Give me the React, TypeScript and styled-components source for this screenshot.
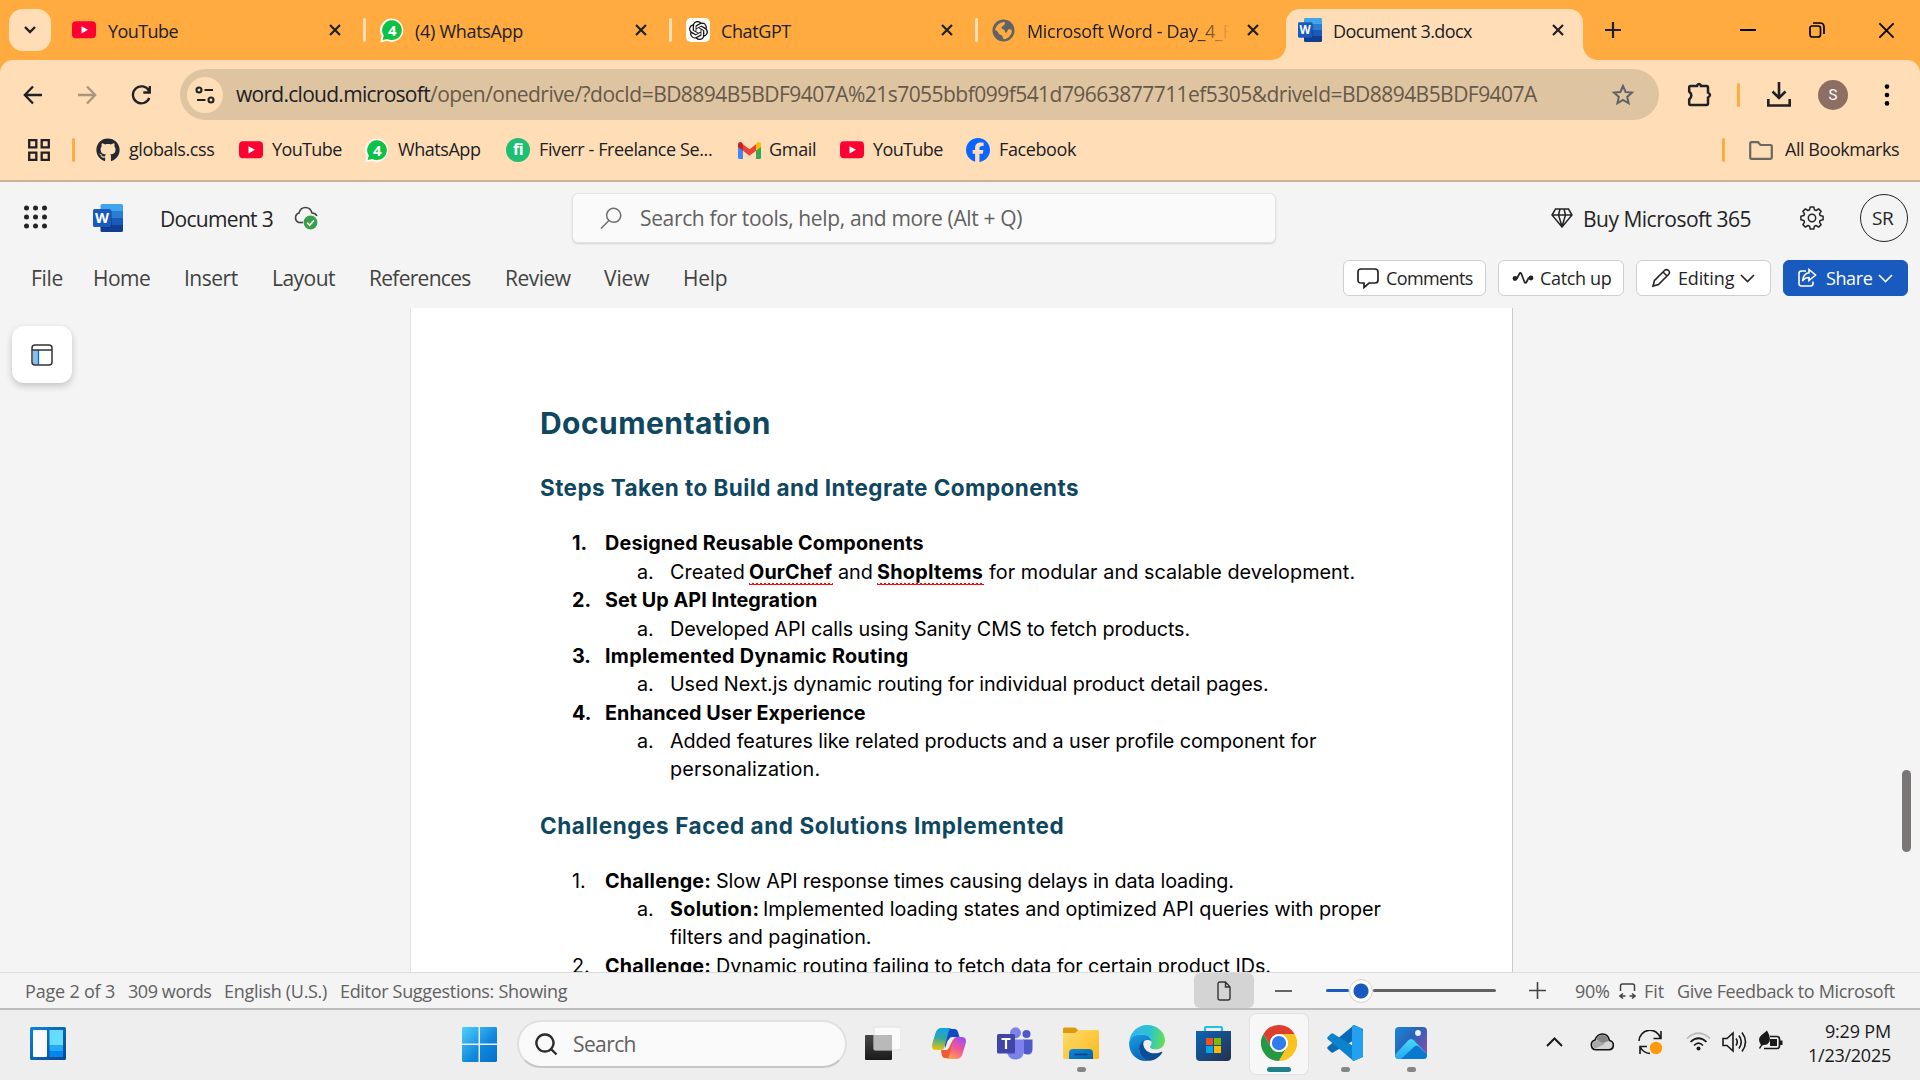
import React from "react";
import styled, { createGlobalStyle } from "styled-components";
import { FaGithub, FaFacebook } from "react-icons/fa6";
import { SiOpenai } from "react-icons/si";

const Global = createGlobalStyle`
  * { box-sizing: border-box; }
  html, body { margin: 0; padding: 0; }
  body { width: 1920px; height: 1080px; overflow: hidden; font-family: "Open Sans", "Noto Sans", sans-serif; color: #202124; }
  svg { display: block; flex: none; }
`;

const Screen = styled.div`
  width: 1920px;
  height: 1080px;
  display: flex;
  flex-direction: column;
  overflow: hidden;
  background: #ffab40;
`;

/* Single-line label with a fixed column width */
const Label = styled.span<{ $w: number; $ls?: number; $size?: number; $ml?: number; $dy?: number; $color?: string }>`
  flex: none;
  width: ${(p) => p.$w}px;
  margin-left: ${(p) => p.$ml ?? 0}px;
  margin-top: ${(p) => p.$dy ?? 0}px;
  font-size: ${(p) => p.$size ?? 18}px;
  letter-spacing: ${(p) => p.$ls ?? 0}px;
  color: ${(p) => p.$color ?? "inherit"};
  line-height: 28px;
  white-space: pre;
`;

const Glyph = styled.span<{ $ml?: number; $mt?: number }>`
  flex: none;
  display: flex;
  margin-left: ${(p) => p.$ml ?? 0}px;
  margin-top: ${(p) => p.$mt ?? 0}px;
`;

const Divider = styled.span<{ $color: string; $ml?: number }>`
  flex: none;
  width: 3px;
  height: 24px;
  border-radius: 2px;
  margin-left: ${(p) => p.$ml ?? 0}px;
  background: ${(p) => p.$color};
`;

/* ---------- Browser chrome ---------- */
const TabStrip = styled.header`
  height: 60px;
  flex: none;
  display: flex;
  padding-left: 9px;
`;
const TabSearch = styled.div`
  width: 42px;
  height: 42px;
  margin: 9px 9px 0 0;
  border-radius: 14px;
  background: #ffdeb7;
  display: grid;
  place-items: center;
`;
const Tab = styled.div<{ $first?: boolean }>`
  width: 306px;
  height: 60px;
  display: flex;
  align-items: center;
  padding-left: ${(p) => (p.$first ? 12 : 14)}px;
`;
const TabEnd = styled.div`
  margin-left: auto;
  display: flex;
  align-items: center;
`;
const ActiveTab = styled.div`
  position: relative;
  width: 297px;
  height: 51px;
  margin: 9px 0 0 2px;
  padding: 0 0 9px 12px;
  border-radius: 14px 14px 0 0;
  background: #ffdeb7;
  display: flex;
  align-items: center;
  &::before, &::after {
    content: "";
    position: absolute;
    bottom: 0;
    width: 15px;
    height: 15px;
  }
  &::before { left: -15px; background: radial-gradient(circle at 0 0, transparent 14.5px, #ffdeb7 15.5px); }
  &::after { right: -15px; background: radial-gradient(circle at 100% 0, transparent 14.5px, #ffdeb7 15.5px); }
`;
const FadeClip = styled.span`
  width: 208px;
  margin-left: 12px;
  overflow: hidden;
  display: flex;
  mask-image: linear-gradient(90deg, #000 170px, transparent 203px);
`;
const WindowButtons = styled.div`
  height: 60px;
  flex: 1;
  display: flex;
  align-items: center;
`;
const ChromeBody = styled.div`
  height: 122px;
  flex: none;
  background: #ffdeb7;
  border-radius: 13px 13px 0 0;
  border-bottom: 2px solid #cbb292;
`;
const Toolbar = styled.div`
  height: 60px;
  padding-top: 9px;
  display: flex;
  align-items: center;
`;
const NavButtons = styled.div`
  width: 180px;
  display: flex;
  padding-left: 21px;
  gap: 30px;
`;
const AddressBar = styled.div`
  width: 1479px;
  height: 51px;
  border-radius: 26px;
  background: #dfc4a1;
  display: flex;
  align-items: center;
  padding-left: 7px;
`;
const SiteInfo = styled.span`
  width: 36px;
  height: 36px;
  border-radius: 50%;
  background: #ffdeb7;
  display: grid;
  place-items: center;
`;
const Avatar = styled.span`
  width: 30px;
  height: 30px;
  margin-left: 27px;
  border-radius: 50%;
  background: #8d6e63;
  color: #fff;
  font: 15px/30px "Roboto", sans-serif;
  text-align: center;
`;
const Bookmarks = styled.div`
  height: 60px;
  display: flex;
  align-items: center;
  padding-left: 28px;
`;
const FiverrBadge = styled.span`
  width: 24px;
  height: 24px;
  border-radius: 50%;
  background: #1dbf73;
  color: #fff;
  font: bold 16px/23px "Open Sans", sans-serif;
  letter-spacing: -0.5px;
  text-align: center;
`;
const GptBadge = styled.span`
  width: 24px;
  height: 24px;
  border-radius: 5px;
  background: #fff;
  color: #111;
  display: grid;
  place-items: center;
`;

/* ---------- Word ---------- */
const WordHeader = styled.div`
  height: 73px;
  flex: none;
  padding-bottom: 1px;
  background: #f4f4f4;
  display: flex;
  align-items: center;
`;
const SearchBox = styled.div`
  width: 704px;
  height: 50px;
  margin-left: 253px;
  padding-left: 27px;
  border-radius: 6px;
  background: #fafafa;
  border: 1px solid #e3e3e3;
  box-shadow: 0 1px 2px rgba(0, 0, 0, 0.14);
  display: flex;
  align-items: center;
`;
const Persona = styled.span`
  width: 48px;
  height: 48px;
  margin-left: 36px;
  border: 1.5px solid #242424;
  border-radius: 50%;
  display: flex;
  align-items: center;
  padding-left: 11px;
`;
const Ribbon = styled.nav`
  height: 53px;
  flex: none;
  background: #f4f4f4;
  color: #424242;
  display: flex;
  align-items: center;
  padding: 0 12px 7px 31px;
`;
const Actions = styled.div`
  margin-left: auto;
  display: flex;
  gap: 12px;
`;
const ActionButton = styled.span<{ $w: number; $primary?: boolean }>`
  width: ${(p) => p.$w}px;
  height: 36px;
  border-radius: 6px;
  border: 1px solid ${(p) => (p.$primary ? "#185abd" : "#cfcfcf")};
  background: ${(p) => (p.$primary ? "#185abd" : "#fff")};
  color: ${(p) => (p.$primary ? "#fff" : "#242424")};
  display: flex;
  align-items: center;
`;
const Canvas = styled.main`
  height: 664px;
  flex: none;
  background: #f4f4f4;
  display: flex;
  overflow: hidden;
`;
const NavPaneButton = styled.div`
  width: 60px;
  height: 57px;
  margin: 18px 338px 0 12px;
  border-radius: 12px;
  background: #fff;
  box-shadow: 0 3px 7px rgba(0, 0, 0, 0.2);
  display: grid;
  place-items: center;
`;
const Page = styled.article`
  width: 1103px;
  height: 700px;
  flex: none;
  padding: 95px 0 0 129px;
  background: #fff;
  border: solid #e1e1e1;
  border-width: 0 1px;
  border-right-color: #c9c9c9;
  font-family: "Inter", "Open Sans", sans-serif;
  color: #000;
`;
const ScrollThumb = styled.div`
  width: 9px;
  height: 82px;
  margin: 462px 0 0 389px;
  border-radius: 5px;
  background: #797775;
`;
const Title = styled.h1`
  margin: 0 0 42px;
  font-size: 30px;
  line-height: 40px;
  color: #0f4761;
  display: flex;
`;
const Subtitle = styled.h2`
  margin: 0 0 28px;
  font-size: 22.5px;
  line-height: 30px;
  color: #0f4761;
  display: flex;
`;
const List = styled.div<{ $gap?: number }>`
  padding-left: 32px;
  margin-bottom: ${(p) => p.$gap ?? 0}px;
`;
const Line = styled.div<{ $h?: number; $level?: number }>`
  height: ${(p) => p.$h ?? 28}px;
  line-height: 28px;
  font-size: 19.8px;
  padding-left: ${(p) => (p.$level ? 65 : 0)}px;
  display: flex;
  white-space: pre;
`;
const Marker = styled.span<{ $bold?: boolean; $w?: number }>`
  width: ${(p) => p.$w ?? 33}px;
  flex: none;
  font-weight: ${(p) => (p.$bold ? 700 : 400)};
`;
const Run = styled.span<{ $w: number; $ls?: number; $bold?: boolean; $ml?: number; $wavy?: boolean }>`
  flex: none;
  width: ${(p) => p.$w}px;
  margin-left: ${(p) => p.$ml ?? 0}px;
  letter-spacing: ${(p) => p.$ls ?? 0}px;
  font-weight: ${(p) => (p.$bold ? 700 : 400)};
  height: 28px;
  ${(p) => p.$wavy && `
    background: radial-gradient(circle at 2px 0, transparent 1.2px, #f00 1.3px, #f00 2.1px, transparent 2.3px) 0 25px / 4px 3px repeat-x;
  `}
`;
const StatusBar = styled.footer`
  height: 38px;
  flex: none;
  background: #f4f4f4;
  border-top: 1px solid #dcdcdc;
  border-bottom: 2px solid #bdbdbd;
  color: #616161;
  display: flex;
  align-items: center;
  padding-left: 25px;
`;
const ViewButton = styled.span`
  width: 60px;
  height: 35px;
  margin-left: 627px;
  border-radius: 6px;
  background: #d4d4d4;
  display: grid;
  place-items: center;
`;
const Slider = styled.span`
  display: flex;
  align-items: center;
  width: 170px;
  margin-left: 34px;
`;
const Rail = styled.span<{ $w: number; $c: string }>`
  width: ${(p) => p.$w}px;
  height: 3px;
  border-radius: 2px;
  background: ${(p) => p.$c};
`;
const Knob = styled.span`
  width: 24px;
  height: 24px;
  border-radius: 50%;
  border: 1px solid #d1d1d1;
  background: radial-gradient(circle, #185abd 7px, #fff 8px);
`;

/* ---------- Taskbar ---------- */
const Taskbar = styled.div`
  height: 70px;
  flex: none;
  background: #eeeeee;
  display: flex;
  align-items: flex-start;
  padding-left: 30px;
`;
const StartSearch = styled.div`
  width: 330px;
  height: 48px;
  margin: 10px 0 0 20px;
  padding-left: 16px;
  border-radius: 24px;
  background: #fafafa;
  border: 2px solid #e0e0e0;
  border-bottom-color: #c6c6c6;
  display: flex;
  align-items: center;
`;
const Apps = styled.div`
  display: flex;
  margin-left: 3px;
`;
const AppSlot = styled.div<{ $active?: boolean }>`
  width: 58px;
  height: 60px;
  margin: 4px 4px 0;
  padding-top: 11px;
  border-radius: 6px;
  display: flex;
  flex-direction: column;
  align-items: center;
  background: ${(p) => (p.$active ? "#f7f7f7" : "transparent")};
  box-shadow: ${(p) => (p.$active ? "0 0 0 1px #e2e2e2" : "none")};
`;
const Indicator = styled.span<{ $active?: boolean; $mt?: number }>`
  width: ${(p) => (p.$active ? 24 : 9)}px;
  height: 5px;
  margin-top: ${(p) => p.$mt ?? 6}px;
  border-radius: 3px;
  background: ${(p) => (p.$active ? "#22808d" : "#868686")};
`;
const Tray = styled.div`
  height: 64px;
  margin-left: auto;
  display: flex;
  align-items: center;
  color: #1a1a1a;
  padding-right: 29px;
`;
const Clock = styled.div`
  margin: 2px 0 0 25px;
  display: flex;
  flex-direction: column;
  align-items: flex-end;
  & > span { line-height: 24px; }
`;

/* ---------- Icons ---------- */
const YouTubeIcon = () => (
  <svg width="24" height="18" viewBox="0 0 24 18"><rect y=".3" width="24" height="17" rx="4" fill="#f03" /><path d="M9.5 5.2 16 8.8 9.5 12.4Z" fill="#fff" /></svg>
);
const WhatsAppIcon = () => (
  <svg width="24" height="25" viewBox="0 0 24 25">
    <path d="M12 .5A11.7 11.7 0 1 1 6.6 22.8L.4 24.4 1.6 18A11.7 11.7 0 0 1 12 .5Z" fill="#fff" opacity=".92" />
    <path d="M12.2 2.3A9.9 9.9 0 1 1 7.2 20.9L2.6 22 3.8 17.6A9.9 9.9 0 0 1 12.2 2.3Z" fill="#0cc143" />
    <text x="12.2" y="17.8" fontSize="15" fontWeight="700" fontFamily="Open Sans" textAnchor="middle" fill="#fff">4</text>
  </svg>
);
const CloseX = ({ s = 12, w = 2.2, c = "#202124" }: { s?: number; w?: number; c?: string }) => (
  <svg width={s} height={s} viewBox="0 0 12 12"><path d="M1 1l10 10M11 1L1 11" stroke={c} strokeWidth={(w * 12) / s} fill="none" /></svg>
);
const GlobeIcon = () => (
  <svg width="23" height="23" viewBox="0 0 24 24"><circle cx="12" cy="12" r="11.5" fill="#5f6368" /><path d="M3.2 11.5C4 7 8 3.2 12.5 3c1.8.2 1 2 .4 3-.9 1.4-3 1.4-3 3.2 0 1.5 2 1.3 3 2.3 1 1.1.2 2.8 1.6 2.8 1.8 0 1.2-3 3-3.600 1.4-.4 2.8.3 3.300 1.2-.2 4.700-3.700 8.600-8.300 9.100-1.500-.4-1.200-2.400-1.700-3.400-.8-1.500-3.300-1-3.900-2.800-.5-1.400-1.900-2.800-3.700-3.300Z" fill="#ffab40" /></svg>
);
const WordIcon = ({ w, h, id }: { w: number; h: number; id: string }) => (
  <svg width={w} height={h} viewBox="0 0 30 28" preserveAspectRatio="none">
    <defs><clipPath id={id}><rect x="7.5" width="22.5" height="28" rx="1.6" /></clipPath></defs>
    <g clipPath={`url(#${id})`}><path fill="#41a5ee" d="M7 0h23v7H7z" /><path fill="#2b7cd3" d="M7 7h23v7H7z" /><path fill="#185abd" d="M7 14h23v7H7z" /><path fill="#103f91" d="M7 21h23v7H7z" /><path fill="#000" opacity=".2" d="M7 6h10.500a1.500 1.500 0 0 1 1.500 1.500v14a2 2 0 0 1-2 2H7z" /></g>
    <rect y="5" width="18" height="18" rx="1.6" fill="#185abd" />
    <text x="9" y="18.8" fontSize="13.5" fontWeight="700" fontFamily="Open Sans" textAnchor="middle" fill="#fff" textLength="14" lengthAdjust="spacingAndGlyphs">W</text>
  </svg>
);
const Stroke = ({ w, h, d, sw = 2, c = "#202124", vb }: { w: number; h: number; d: string; sw?: number; c?: string; vb?: string }) => (
  <svg width={w} height={h} viewBox={vb ?? `0 0 ${w} ${h}`}><path d={d} fill="none" stroke={c} strokeWidth={sw} /></svg>
);
const GmailIcon = () => (
  <svg width="23" height="17" viewBox="0 0 23 17"><path d="M0 2.500V15.500A1.500 1.500 0 0 0 1.500 17H5V8.500L0 4Z" fill="#4285f4" /><path d="M23 2.500V15.500A1.500 1.500 0 0 1 21.500 17H18V8.500L23 4Z" fill="#34a853" /><path d="M18 2.200V8.800L23 5V2.500C23 .2 20.500-.7 19 .8Z" fill="#fbbc04" /><path d="M5 8.800V2.200L11.500 7.200 18 2.200V8.800L11.500 13.800Z" fill="#ea4335" /><path d="M0 2.500V5L5 8.800V2.200L4 .8C2.500-.7 0 .2 0 2.500Z" fill="#c5221f" /></svg>
);
const GearIcon = () => (
  <svg width="24" height="24" viewBox="0 0 24 24" fill="none" stroke="#242424" strokeWidth="1.5" strokeLinejoin="round">
    <circle cx="12" cy="12" r="3.7" />
    <path d="M10.200.9h3.600l.6 2.900 1.700.7 2.500-1.600 2.500 2.500-1.600 2.500.7 1.700 2.900.6v3.600l-2.900.6-.7 1.700 1.600 2.500-2.500 2.500-2.500-1.600-1.700.7-.6 2.900h-3.600l-.6-2.900-1.700-.7-2.500 1.600-2.500-2.500 1.600-2.500-.7-1.700-2.900-.6v-3.600l2.900-.6.7-1.700-1.600-2.500 2.500-2.500 2.500 1.600 1.700-.7Z" />
  </svg>
);
const WidgetsIcon = () => (
  <svg width="36" height="33" viewBox="0 0 36 33"><defs><linearGradient id="wg" x1="0" y1="0" x2="1" y2="1"><stop offset="0" stopColor="#0a84dc" /><stop offset="1" stopColor="#0d4690" /></linearGradient></defs>
    <rect width="36" height="33" rx="1.5" fill="url(#wg)" /><rect x="3" y="3" width="14" height="27" rx="1" fill="#fafafa" /><path fill="#68dcff" d="M19.500 3H33V18H19.500Z" /><path fill="#23a9f5" d="M19.500 18H33V24H19.500Z" /><path fill="#0486ee" d="M19.500 24H33V30H19.500Z" /></svg>
);
const FolderIcon = () => (
  <svg width="36" height="33" viewBox="0 0 36 33"><defs><linearGradient id="fy" x1="0" y1="0" x2="1" y2="1"><stop offset="0" stopColor="#ffdb70" /><stop offset="1" stopColor="#fbb917" /></linearGradient><linearGradient id="fb" x1="0" y1="0" x2="1" y2="1"><stop offset="0" stopColor="#1288d8" /><stop offset="1" stopColor="#0062b0" /></linearGradient></defs>
    <path d="M0 2Q0 .5 1.500.5H11Q12.500.5 13.500 1.500L16 4V10H0Z" fill="#dc9a0c" /><path d="M0 6H12L15.500 3H34.500Q36 3 36 4.500V30.500Q36 32 34.500 32H1.500Q0 32 0 30.500Z" fill="url(#fy)" /><path d="M6 32V26Q6 22 10 22H26Q30 22 30 26V32Z" fill="url(#fb)" /><path d="M11.500 27.500H24.500" stroke="#05467f" strokeWidth="1.5" /></svg>
);
const EdgeIcon = () => (
  <svg width="36" height="36" viewBox="0 0 36 36"><defs>
    <linearGradient id="e1" x1="0" y1=".5" x2="1" y2=".6"><stop offset="0" stopColor="#2fb4f0" /><stop offset=".55" stopColor="#2bc3d2" /><stop offset="1" stopColor="#69e04b" /></linearGradient>
    <linearGradient id="e2" x1="0" y1="0" x2=".4" y2="1"><stop offset="0" stopColor="#1b9de2" /><stop offset="1" stopColor="#0666bd" /></linearGradient>
    <linearGradient id="e3" x1="0" y1="0" x2="1" y2="1"><stop offset="0" stopColor="#0b4f9e" /><stop offset="1" stopColor="#114a8b" /></linearGradient></defs>
    <path d="M.3 16C1.500 6.800 9 0 18.200 0 28.500 0 36 7.400 36 15.300 36 21 31.600 24.400 27 24.400 23.600 24.400 21 23.300 21 22 21 21 22.600 20.300 22.600 17.500 22.600 14.200 19.500 9.500 12.500 9.500 6 9.500 2 13 .3 16Z" fill="url(#e1)" />
    <path d="M.1 18C.5 12.500 6 9.400 12.500 9.400 19.500 9.400 22.500 13.500 22.600 17 21.400 13.400 13.500 14.500 11 21 9 27 12.500 34 20 35.900 8.500 37 0 29.500 .1 18Z" fill="url(#e2)" />
    <path d="M15.500 15.200C11.500 17.200 9.800 21 10.200 25 10.800 30.500 15 35.400 20.500 35.800 26 35.500 30.500 32.200 33.300 27.600 33.600 26.800 33 26.500 32.300 26.800 26 30 16.500 28.500 14.500 20.500 14 18.400 14.500 16.500 15.500 15.200Z" fill="url(#e3)" /></svg>
);
const StoreIcon = () => (
  <svg width="35" height="36" viewBox="0 0 35 36"><defs><linearGradient id="st" x1="0" y1="0" x2="1" y2="1"><stop offset="0" stopColor="#0a66b6" /><stop offset="1" stopColor="#26304f" /></linearGradient></defs>
    <path d="M9 7V3.200Q9 2 10.200 2H24.800Q26 2 26 3.200V7" fill="none" stroke="#25bdea" strokeWidth="2.2" /><path d="M0 6H35V32Q35 36 31 36H4Q0 36 0 32Z" fill="url(#st)" />
    <path fill="#f25022" d="M10 13h7v7h-7z" /><path fill="#7fba00" d="M18 13h7v7h-7z" /><path fill="#00a4ef" d="M10 21h7v7h-7z" /><path fill="#ffb900" d="M18 21h7v7h-7z" /></svg>
);
const ChromeIcon = () => (
  <svg width="36" height="36" viewBox="0 0 48 48"><path d="M3.200 12A24 24 0 0 1 44.800 12H24A12 12 0 0 0 13.600 30Z" fill="#dd3e30" /><path d="M3.200 12A24 24 0 0 0 24 48L34.400 30A12 12 0 0 1 13.600 30Z" fill="#259745" /><path d="M44.800 12A24 24 0 0 1 24 48L34.400 30A12 12 0 0 0 24 12Z" fill="#fcc31e" /><circle cx="24" cy="24" r="12" fill="#fff" /><circle cx="24" cy="24" r="9.5" fill="#2f7cf0" /></svg>
);
const CodeIcon = () => (
  <svg width="36" height="36" viewBox="0 0 36 36"><path d="M27 0 36 4V10L6 27.500Q5 28 4 27.200L.7 24Q-.3 22.800.8 21.800Z" fill="#0a6ab5" /><path d="M26.500 36 .8 14.200Q-.3 13.200.7 12L4 8.800Q5 8 6 8.500L36 27V32Z" fill="#0e83cd" /><path d="M26.500 36Q25 35.500 25 34V2Q25 .5 26.500 0L34.500 3.600Q36 4.300 36 6V30Q36 31.700 34.500 32.400Z" fill="#24a0f0" /></svg>
);
const PhotosIcon = () => (
  <svg width="32" height="32" viewBox="0 0 32 32"><defs><linearGradient id="ph" x1="0" y1="0" x2="1" y2=".8"><stop offset="0" stopColor="#1787d8" /><stop offset=".5" stopColor="#2b62b8" /><stop offset="1" stopColor="#8a4fa8" /></linearGradient><linearGradient id="ph2" x1="0" y1="0" x2="0" y2="1"><stop offset="0" stopColor="#48d8fb" /><stop offset="1" stopColor="#1fa6ea" /></linearGradient><clipPath id="pc"><rect width="32" height="32" rx="4" /></clipPath></defs>
    <g clipPath="url(#pc)"><rect width="32" height="32" fill="url(#ph)" /><path d="M-2 30 13 13.500Q16 10.500 19 13.500L34 29V34H-2Z" fill="url(#ph2)" /><path d="M6 32 19.500 19.500Q21.500 17.800 23.500 19.500L34 29V34H4Z" fill="#0b78cf" /><circle cx="23" cy="6" r="2.9" fill="#e8f4fd" /></g></svg>
);
const TeamsIcon = () => (
  <svg width="36" height="33" viewBox="0 0 36 33"><circle cx="29.5" cy="7" r="4" fill="#5059c9" /><circle cx="18.5" cy="5.8" r="5.5" fill="#7b83eb" /><path d="M26 12.500H35.500V22Q35.500 27.500 30.500 27.500 27 27.500 26 25Z" fill="#5059c9" /><path d="M10 12.500H27V23Q27 32.500 18.500 32.500 10 32.500 10 23Z" fill="#7b83eb" /><rect y="7" width="18" height="19.5" rx="1.5" fill="#4045a8" /><path d="M4.500 12H13.500M9 12V22" stroke="#fff" strokeWidth="2.2" /></svg>
);
const CopilotIcon = () => (
  <svg width="34" height="32" viewBox="0 0 34 32"><defs>
    <linearGradient id="c1" x1=".3" y1="0" x2=".2" y2="1"><stop offset="0" stopColor="#14a1ea" /><stop offset=".45" stopColor="#31a8a0" /><stop offset="1" stopColor="#f5c500" /></linearGradient>
    <linearGradient id="c2" x1=".8" y1="0" x2=".3" y2="1"><stop offset="0" stopColor="#9d4df0" /><stop offset=".5" stopColor="#f0559c" /><stop offset="1" stopColor="#ffa14e" /></linearGradient></defs>
    <path d="M15 1H22.500Q25 1 26 4L27.500 9H21Q18 9 17 12L14 22 11 13Z" fill="#1549c6" /><path d="M9 22H14Q16 22 17 19L20.500 10 23 20 19 30H13Q10.500 30 9.800 27Z" fill="#ef5a39" />
    <path d="M9.500 0H20Q17.500.5 16.500 4L12.500 19Q11.500 22 8.500 22H4Q-1.500 22 .5 15L3.500 5Q5 0 9.500 0Z" fill="url(#c1)" /><path d="M24.500 31H13.500Q16.500 30.500 17.500 27L21 12.500Q22 9 25 9H29.500Q35.500 9 33.500 16L30.500 26Q29 31 24.500 31Z" fill="url(#c2)" />
    <path d="M18.500 9.500H21.500L20.500 12.500 17 19.500Q16 22 13 22H12.500L15.500 13Z" fill="#f3f1f0" /></svg>
);

const DARK = "#242424";

export default function App() {
  return (
    <Screen>
      <Global />
      <TabStrip>
        <TabSearch><Stroke w={14} h={10} d="M2 2L7 7L12 2" sw={2.4} /></TabSearch>
        <Tab $first>
          <YouTubeIcon /><Label $w={70} $ls={-0.57} $ml={12} $dy={2}>YouTube</Label>
          <TabEnd><CloseX /><Divider $color="#ffdeb7" $ml={22} /></TabEnd>
        </Tab>
        <Tab>
          <WhatsAppIcon /><Label $w={108} $ls={-0.3} $ml={11} $dy={2}>(4) WhatsApp</Label>
          <TabEnd><CloseX /><Divider $color="#ffdeb7" $ml={22} /></TabEnd>
        </Tab>
        <Tab>
          <GptBadge><SiOpenai size={19} /></GptBadge><Label $w={70} $ls={-0.4} $ml={11} $dy={2}>ChatGPT</Label>
          <TabEnd><CloseX /><Divider $color="#ffdeb7" $ml={22} /></TabEnd>
        </Tab>
        <Tab>
          <GlobeIcon /><FadeClip><Label $w={205} $ls={-0.32} $dy={2}>Microsoft Word - Day_4_F</Label></FadeClip>
          <TabEnd><Glyph><CloseX /></Glyph><Glyph $ml={25} /></TabEnd>
        </Tab>
        <ActiveTab>
          <WordIcon w={24} h={24} id="wt" /><Label $w={139} $ls={-0.56} $ml={11} $dy={2}>Document 3.docx</Label>
          <Glyph $ml={80}><CloseX /></Glyph>
        </ActiveTab>
        <WindowButtons>
          <Glyph $ml={22}><Stroke w={16} h={16} d="M8 0V16M0 8H16" sw={2.2} /></Glyph>
          <Glyph $ml={119}><Stroke w={16} h={2} d="M0 1H16" sw={2} c="#000" /></Glyph>
          <Glyph $ml={53}><Stroke w={16} h={16} d="M3 4H9Q11.500 4 11.500 6V12.500Q11.500 15 9 15H3.500Q1 15 1 12.500V6Q1 4 3 4ZM4 1H11Q15 1 15 5V12" sw={1.7} c="#000" /></Glyph>
          <Glyph $ml={53}><CloseX s={17} w={1.8} c="#000" /></Glyph>
        </WindowButtons>
      </TabStrip>

      <ChromeBody>
        <Toolbar>
          <NavButtons>
            <Stroke w={24} h={24} d="M21 12H4M12 3.500L3.800 12L12 20.500" sw={2.3} />
            <Stroke w={24} h={24} d="M3 12H20M12 3.500L20.200 12L12 20.500" sw={2.3} c="#a8957f" />
            <Stroke w={24} h={24} d="M20 8A8.500 8.500 0 1 0 20.300 15M20.800 3V9.500H14.300" sw={2.3} />
          </NavButtons>
          <AddressBar>
            <SiteInfo>
              <svg width="20" height="20" viewBox="0 0 20 20" fill="none" stroke="#202124" strokeWidth="2.1"><circle cx="4" cy="5" r="2.5" /><path d="M9.500 5H18M2 15H10.500" /><circle cx="16" cy="15" r="2.5" /></svg>
            </SiteInfo>
            <Label $w={194} $ls={-0.72} $ml={13} $size={21} $dy={-1}>word.cloud.microsoft</Label>
            <Label $w={1107} $ls={-0.535} $size={21} $dy={-1} $color="#66594a">/open/onedrive/?docId=BD8894B5BDF9407A%21s7055bbf099f541d79663877711ef5305&amp;driveId=BD8894B5BDF9407A</Label>
            <Glyph $ml={74}><Stroke w={24} h={24} d="M12 3L14.600 9L21 9.600L16.200 13.900L17.600 20.300L12 16.900L6.400 20.300L7.800 13.900L3 9.600L9.400 9Z" sw={2} c="#5f6368" /></Glyph>
          </AddressBar>
          <Glyph $ml={28} $mt={-2}><Stroke w={26} h={26} d="M3 5H10V4.500Q12 1.500 14 4.500V5H19.500Q21 5 21 6.500V11.500Q25 14 21 16.500V22.500Q21 24 19.500 24H3.500Q2.200 24 2.200 22.500V18.500Q6.500 14.500 2.200 10.500V6.500Q2.200 5 3.500 5Z" sw={2.5} /></Glyph>
          <Divider $color="#ffab40" $ml={24} />
          <Glyph $ml={27}><Stroke w={24} h={25} d="M12 0V15M5.500 9.500L12 16L18.500 9.500M1.300 17V23.500H22.700V17" sw={2.6} /></Glyph>
          <Avatar>S</Avatar>
          <Glyph $ml={36}><svg width="6" height="22" viewBox="0 0 6 22"><circle cx="3" cy="2.6" r="2.3" /><circle cx="3" cy="11" r="2.3" /><circle cx="3" cy="19.4" r="2.3" /></svg></Glyph>
        </Toolbar>
        <Bookmarks>
          <Stroke w={22} h={22} d="M1.200 1.200H8.300V8.300H1.200ZM13.700 1.200H20.800V8.300H13.700ZM1.200 13.700H8.300V20.800H1.200ZM13.700 13.700H20.800V20.800H13.700Z" sw={2.3} />
          <Divider $color="#ffab40" $ml={22} />
          <Glyph $ml={21}><FaGithub size={24} color="#24292f" /></Glyph><Label $w={85} $ls={-0.4} $ml={9} $dy={-2}>globals.css</Label>
          <Glyph $ml={25}><YouTubeIcon /></Glyph><Label $w={69} $ls={-0.62} $ml={9} $dy={-2}>YouTube</Label>
          <Glyph $ml={24}><WhatsAppIcon /></Glyph><Label $w={82} $ls={-0.45} $ml={9} $dy={-2}>WhatsApp</Label>
          <Glyph $ml={26}><FiverrBadge>fi</FiverrBadge></Glyph><Label $w={173} $ls={-0.4} $ml={9} $dy={-2}>Fiverr - Freelance Se...</Label>
          <Glyph $ml={26}><GmailIcon /></Glyph><Label $w={47} $ls={-0.3} $ml={8} $dy={-2}>Gmail</Label>
          <Glyph $ml={24}><YouTubeIcon /></Glyph><Label $w={69} $ls={-0.62} $ml={9} $dy={-2}>YouTube</Label>
          <Glyph $ml={24}><FaFacebook size={24} color="#0866ff" /></Glyph><Label $w={77} $ls={-0.4} $ml={9} $dy={-2}>Facebook</Label>
          <Divider $color="#ffab40" $ml={646} />
          <Glyph $ml={24}><Stroke w={24} h={19} d="M2.500 1.200H9L11.500 4H21.500Q22.800 4 22.800 5.200V16.500Q22.800 17.800 21.500 17.800H2.500Q1.200 17.800 1.200 16.500V2.500Q1.200 1.200 2.500 1.200Z" sw={2.2} c="#6b6762" /></Glyph>
          <Label $w={114} $ls={-0.45} $ml={12} $dy={-2}>All Bookmarks</Label>
        </Bookmarks>
      </ChromeBody>

      <WordHeader>
        <Glyph $ml={24} $mt={-2}><svg width="24" height="24" viewBox="0 0 24 24" fill={DARK}>{[3, 12, 21].map((y) => [2.5, 11.5, 20.5].map((x) => <circle key={`${x}-${y}`} cx={x} cy={y} r="2.5" />))}</svg></Glyph>
        <Glyph $ml={45}><WordIcon w={30} h={28} id="wh" /></Glyph>
        <Label $w={113} $ls={-0.69} $ml={37} $size={21} $dy={2} $color={DARK}>Document 3</Label>
        <Glyph $ml={20}><svg width="26" height="25" viewBox="0 0 26 25"><path d="M6 16.500A5 5 0 0 1 6 7Q7.500 1.500 12.500 1.500T19 7Q22.500 7 24 10" fill="none" stroke="#424242" strokeWidth="1.6" /><path d="M5.500 16.500H10" stroke="#424242" strokeWidth="1.6" /><circle cx="17.5" cy="16.5" r="6.9" fill="#38a04c" /><path d="M14.200 16.700L16.700 19.200L21 14.200" fill="none" stroke="#fff" strokeWidth="1.6" /></svg></Glyph>
        <SearchBox>
          <Stroke w={22} h={22} d="M9 13.500A7 7 0 1 1 14 15.300Q11 15.300 9 13.500L1 21.500" sw={1.5} c="#707070" />
          <Label $w={382} $ls={-0.35} $ml={18} $size={21} $color="#616161">Search for tools, help, and more (Alt + Q)</Label>
        </SearchBox>
        <Glyph $ml={275}><Stroke w={22} h={20} d="M4.500 1H17.500L21 7L11 19L1 7ZM1 7H21M7.500 7L11 18.500L14.500 7L13 1M9 1L7.500 7" sw={1.5} c={DARK} /></Glyph>
        <Label $w={168} $ls={-0.5} $ml={10} $size={21} $dy={2} $color={DARK}>Buy Microsoft 365</Label>
        <Glyph $ml={49}><GearIcon /></Glyph>
        <Persona><Label $w={24} $ls={-0.3} $size={19} $color={DARK}>SR</Label></Persona>
      </WordHeader>

      <Ribbon>
        <Label $w={32} $ls={-0.31} $size={21}>File</Label>
        <Label $w={57} $ls={-0.5} $ml={30} $size={21}>Home</Label>
        <Label $w={53} $ls={-0.5} $ml={34} $size={21}>Insert</Label>
        <Label $w={63} $ls={-0.53} $ml={35} $size={21}>Layout</Label>
        <Label $w={101} $ls={-0.72} $ml={34} $size={21}>References</Label>
        <Label $w={66} $ls={-0.5} $ml={35} $size={21}>Review</Label>
        <Label $w={46} $ls={-0.1} $ml={33} $size={21}>View</Label>
        <Label $w={45} $ls={-0.25} $ml={33} $size={21}>Help</Label>
        <Actions>
          <ActionButton $w={143}>
            <Glyph $ml={13}><Stroke w={22} h={21} d="M4 1H18Q21 1 21 4V12Q21 15 18 15H12L7 19.500V15H4Q1 15 1 12V4Q1 1 4 1Z" sw={1.7} c={DARK} /></Glyph>
            <Label $w={87} $ls={-0.62} $ml={7} $dy={-1}>Comments</Label>
          </ActionButton>
          <ActionButton $w={126}>
            <Glyph $ml={13}><svg width="22" height="14" viewBox="0 0 22 14"><circle cx="3" cy="7.5" r="2.4" fill={DARK} /><circle cx="19" cy="7" r="2.4" fill={DARK} /><path d="M3 7.500H5L7.500 2.500Q8.300 1 9.200 2.500L12.500 11Q13.500 13 14.500 11L16.500 7H19" fill="none" stroke={DARK} strokeWidth="1.7" /></svg></Glyph>
            <Label $w={72} $ls={-0.35} $ml={6} $dy={-1}>Catch up</Label>
          </ActionButton>
          <ActionButton $w={135}>
            <Glyph $ml={14}><Stroke w={20} h={20} d="M2 18L3.500 12.500L13.500 2.500Q15.500.8 17.500 2.500T17.500 6.500L7.500 16.500ZM12 4L16 8" sw={1.6} c={DARK} /></Glyph>
            <Label $w={56} $ls={-0.15} $ml={7} $dy={-1}>Editing</Label>
            <Glyph $ml={6}><Stroke w={15} h={9} d="M1 1L7.500 7.500L14 1" sw={1.6} c={DARK} /></Glyph>
          </ActionButton>
          <ActionButton $w={125} $primary>
            <Glyph $ml={13}><Stroke w={20} h={20} d="M9 3H4.500Q2 3 2 5.500V15.500Q2 18 4.500 18H13.500Q16 18 16 15.500V13.500M12 1.500L18.500 7L12 12.500V9.500Q8 9.500 5.500 13Q6.500 5.500 12 4.800Z" sw={1.6} c="#fff" /></Glyph>
            <Label $w={46} $ls={-0.4} $ml={9} $dy={-1}>Share</Label>
            <Glyph $ml={6}><Stroke w={15} h={9} d="M1 1L7.500 7.500L14 1" sw={1.6} c="#fff" /></Glyph>
          </ActionButton>
        </Actions>
      </Ribbon>

      <Canvas>
        <NavPaneButton>
          <svg width="22" height="22" viewBox="0 0 22 22"><path d="M2 6H7.500V20.500H3.500Q2 20.500 2 19Z" fill="#84bff0" /><path d="M7.500 6V20.500" stroke="#1068b8" strokeWidth="1.3" /><path d="M4 1H18Q21 1 21 4V18Q21 21 18 21H4Q1 21 1 18V4Q1 1 4 1ZM1 6H21" fill="none" stroke="#333" strokeWidth="1.5" /></svg>
        </NavPaneButton>
        <Page>
          <Title><Run $w={231} $ls={0.44} $bold>Documentation</Run></Title>
          <Subtitle><Run $w={544} $ls={0.42} $bold>Steps Taken to Build and Integrate Components</Run></Subtitle>
          <List $gap={28}>
            <Line $h={29}><Marker $bold>1.</Marker><Run $w={322} $ls={0.17} $bold>Designed Reusable Components</Run></Line>
            <Line $level={1}>
              <Marker>a.</Marker><Run $w={75} $ls={0.08}>Created</Run><Run $w={84} $ls={0.15} $ml={4} $bold $wavy>OurChef</Run><Run $w={35} $ml={5}>and</Run>
              <Run $w={107} $ls={0.28} $ml={4} $bold $wavy>ShopItems</Run><Run $w={366} $ls={0.06} $ml={5}>for modular and scalable development.</Run>
            </Line>
            <Line $h={29}><Marker $bold>2.</Marker><Run $w={215} $ls={0.03} $bold>Set Up API Integration</Run></Line>
            <Line $level={1} $h={27}><Marker>a.</Marker><Run $w={521} $ls={-0.13}>Developed API calls using Sanity CMS to fetch products.</Run></Line>
            <Line><Marker $bold>3.</Marker><Run $w={306} $ls={0.29} $bold>Implemented Dynamic Routing</Run></Line>
            <Line $level={1} $h={29}><Marker>a.</Marker><Run $w={600} $ls={-0.1}>Used Next.js dynamic routing for individual product detail pages.</Run></Line>
            <Line><Marker $bold>4.</Marker><Run $w={264} $ls={0.03} $bold>Enhanced User Experience</Run></Line>
            <Line $level={1}><Marker>a.</Marker><Run $w={647} $ls={-0.075}>Added features like related products and a user profile component for</Run></Line>
            <Line $level={1}><Marker /><Run $w={151} $ls={0.12}>personalization.</Run></Line>
          </List>
          <Subtitle><Run $w={528} $ls={0.57} $bold>Challenges Faced and Solutions Implemented</Run></Subtitle>
          <List>
            <Line><Marker>1.</Marker><Run $w={107} $ls={0.2} $bold>Challenge:</Run><Run $w={519} $ls={-0.12} $ml={4}>Slow API response times causing delays in data loading.</Run></Line>
            <Line $level={1}><Marker>a.</Marker><Run $w={90} $ls={0.33} $bold>Solution:</Run><Run $w={619} $ls={-0.04} $ml={3}>Implemented loading states and optimized API queries with proper</Run></Line>
            <Line $level={1} $h={29}><Marker /><Run $w={202} $ls={-0.05}>filters and pagination.</Run></Line>
            <Line><Marker>2.</Marker><Run $w={107} $ls={0.2} $bold>Challenge:</Run><Run $w={556} $ls={-0.075} $ml={4}>Dynamic routing failing to fetch data for certain product IDs.</Run></Line>
          </List>
        </Page>
        <ScrollThumb />
      </Canvas>

      <StatusBar>
        <Label $w={90} $ls={-0.2}>Page 2 of 3</Label>
        <Label $w={83} $ls={-0.42} $ml={13}>309 words</Label>
        <Label $w={103} $ls={-0.3} $ml={13}>English (U.S.)</Label>
        <Label $w={227} $ls={-0.32} $ml={13}>Editor Suggestions: Showing</Label>
        <ViewButton><Stroke w={14} h={20} d="M3 1H8.500L13 6V17Q13 19 11 19H3Q1 19 1 17V3Q1 1 3 1ZM8.500 1V6H13" sw={1.4} c="#333" /></ViewButton>
        <Glyph $ml={21}><Stroke w={17} h={2} d="M0 1H17" sw={1.6} c="#424242" /></Glyph>
        <Slider><Rail $w={23} $c="#185abd" /><Knob /><Rail $w={123} $c="#616161" /></Slider>
        <Glyph $ml={33}><Stroke w={17} h={17} d="M8.500 0V17M0 8.500H17" sw={1.6} c="#424242" /></Glyph>
        <Label $w={34} $ls={-0.3} $ml={29}>90%</Label>
        <Glyph $ml={10}><Stroke w={17} h={16} d="M1.500 8V3Q1.500 1 3.500 1H13.500Q15.500 1 15.500 3V8M4 10.500L1 13L4 15.500M1 13H6.500M13 10.500L16 13L13 15.500M16 13H10.500" sw={1.5} c="#424242" /></Glyph>
        <Label $w={21} $ml={8}>Fit</Label>
        <Label $w={218} $ls={-0.35} $ml={12}>Give Feedback to Microsoft</Label>
      </StatusBar>

      <Taskbar>
        <Glyph $mt={17}><WidgetsIcon /></Glyph>
        <Glyph $ml={396} $mt={17}>
          <svg width="35" height="35" viewBox="0 0 35 35"><defs><linearGradient id="win" gradientUnits="userSpaceOnUse" x1="0" y1="0" x2="35" y2="35"><stop offset="0" stopColor="#4fd0fa" /><stop offset=".6" stopColor="#0f86dc" /><stop offset="1" stopColor="#0670cc" /></linearGradient></defs><path d="M1 0H16.500V16.500H0V1ZM18 0H34L35 1V16.500H18ZM0 18H16.500V35H1L0 34ZM18 18H35V34L34 35H18Z" fill="url(#win)" /></svg>
        </Glyph>
        <StartSearch>
          <Stroke w={23} h={23} d="M10 1.500A8.500 8.500 0 1 1 9.900 1.500ZM16 16L21.500 21.500" sw={2.4} c="#2b2b2b" />
          <Label $w={63} $ls={-0.6} $ml={15} $size={21} $color="#616161">Search</Label>
        </StartSearch>
        <Apps>
          <AppSlot><svg width="36" height="36" viewBox="0 0 36 36"><defs><linearGradient id="tv" x1="0" y1="0" x2="0" y2="1"><stop offset="0" stopColor="#474747" /><stop offset="1" stopColor="#1a1a1a" /></linearGradient></defs><rect y="10" width="27" height="25" rx="1" fill="url(#tv)" /><rect x="9" y="2" width="27" height="23" rx="1" fill="#fafafa" stroke="#dedede" /><path d="M9 10H27V25H9Z" fill="#b9b9b9" /></svg></AppSlot>
          <AppSlot><Glyph $mt={3}><CopilotIcon /></Glyph></AppSlot>
          <AppSlot><Glyph $mt={2}><TeamsIcon /></Glyph></AppSlot>
          <AppSlot><Glyph $mt={2}><FolderIcon /></Glyph><Indicator $mt={7} /></AppSlot>
          <AppSlot><EdgeIcon /></AppSlot>
          <AppSlot><StoreIcon /></AppSlot>
          <AppSlot $active><ChromeIcon /><Indicator $active /></AppSlot>
          <AppSlot><CodeIcon /><Indicator /></AppSlot>
          <AppSlot><Glyph $mt={2}><PhotosIcon /></Glyph><Indicator $mt={8} /></AppSlot>
        </Apps>
        <Tray>
          <Stroke w={17} h={10} d="M1 9L8.500 1.500L16 9" sw={2} c="#1a1a1a" />
          <Glyph $ml={27}><svg width="25" height="18" viewBox="0 0 25 18"><path d="M6 16.800A5 5 0 0 1 5 7Q7 1 12.500 1T19.500 7.500A4.700 4.700 0 0 1 19 16.800Z" fill="#d4d4d4" stroke="#111" strokeWidth="1.6" /><path d="M6 6Q8 2 12.500 2T18.500 8L12 10.500Z" fill="#858585" /><path d="M2.500 11Q4 7.500 8 7.500L15 11 5 15.500Q2.500 14.500 2.500 11Z" fill="#a8a8a8" /></svg></Glyph>
          <Glyph $ml={23}><svg width="25" height="25" viewBox="0 0 25 25" fill="none" stroke="#1a1a1a" strokeWidth="1.6"><path d="M1 11A11 11 0 0 1 22.500 8M23 1V8.500H15.500M2 24V16.500H9M2 16.500Q5 23 12 23.500" /><circle cx="18" cy="18" r="6.2" fill="#ff9a0a" stroke="none" /></svg></Glyph>
          <Glyph $ml={23}><svg width="25" height="20" viewBox="0 0 25 20" fill="none" stroke="#1a1a1a" strokeWidth="1.7"><path d="M1 6.500Q12.500-4 24 6.500" stroke="#bdbdbd" /><path d="M4.500 10Q12.500 2.500 20.500 10M8 13.500Q12.500 9 17 13.500" /><circle cx="12.5" cy="16.5" r="2" fill="#1a1a1a" stroke="none" /></svg></Glyph>
          <Glyph $ml={11}><Stroke w={25} h={22} d="M1 7.500H5L11 2V20L5 14.500H1ZM14 7.500Q16.500 11 14 14.500M17 4.500Q21.500 11 17 17.500M20 1.500Q27 11 20 20.500" sw={1.6} c="#1a1a1a" /></Glyph>
          <Glyph $ml={11} $mt={-3}><svg width="25" height="21" viewBox="0 0 25 21"><path d="M12 6.500H19Q21.500 6.500 21.500 9V16Q21.500 18.500 19 18.500H6" fill="none" stroke="#1a1a1a" strokeWidth="1.7" /><rect x="12" y="9" width="7" height="7" fill="#1a1a1a" /><rect x="22" y="10.5" width="2.5" height="4.5" fill="#1a1a1a" /><path d="M1 18Q2 16 3 15Q-1 9 3 5.500Q5.500 3.500 9 .5Q13 7 11.500 11.500Q9.500 15.500 5 15Q3.500 16 2 19Z" fill="#1a1a1a" /></svg></Glyph>
          <Clock><Label $w={66} $ls={-0.2}>9:29 PM</Label><Label $w={83} $ls={-0.25}>1/23/2025</Label></Clock>
        </Tray>
      </Taskbar>
    </Screen>
  );
}
